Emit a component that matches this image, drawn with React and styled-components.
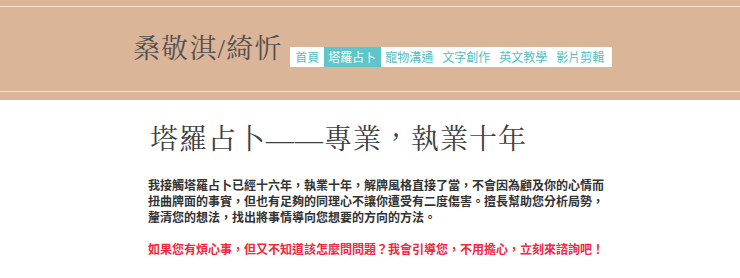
import React from "react";
import styled, { createGlobalStyle } from "styled-components";

const GlobalStyle = createGlobalStyle`
  html, body {
    margin: 0;
    padding: 0;
    background: #ffffff;
  }
  body {
    font-family: "Noto Sans CJK TC", sans-serif;
  }
`;

const Header = styled.header`
  background: #dab598;
  padding: 6px 0 8px;
`;

const HeaderInner = styled.div`
  height: 86px;
  box-sizing: border-box;
  border-top: 1px solid #f7e3cf;
  border-bottom: 1px solid #f7e3cf;
  display: flex;
  align-items: flex-end;
  padding: 0 0 24px 133px;
`;

const SiteTitle = styled.h1`
  margin: 0 7px 2px 0;
  font-family: "Liberation Serif", "Noto Serif CJK TC", "Noto Sans CJK TC", serif;
  font-size: 27px;
  font-weight: normal;
  line-height: 32px;
  color: #545050;
  letter-spacing: 1.2px;
`;

const Nav = styled.nav`
  display: flex;
  background: #ffffff;
  height: 20px;
  padding: 0 3px 0 1px;
`;

const NavItem = styled.a`
  display: flex;
  align-items: center;
  padding: 0 4.5px;
  font-size: 12px;
  line-height: 20px;
  text-decoration: none;
  color: ${(p) => (p.$active ? "#ffffff" : "#4fbfc4")};
  background: ${(p) => (p.$active ? "#5ec6ca" : "transparent")};
`;

const Main = styled.main`
  padding: 23px 0 0 148px;
  width: 459px;
`;

const Heading = styled.h2`
  margin: 0 0 20px 2px;
  font-family: "Liberation Serif", "Noto Serif CJK TC", "Noto Sans CJK TC", serif;
  font-size: 28px;
  font-weight: normal;
  line-height: 34px;
  color: #3f3f3f;
  letter-spacing: 1px;
`;

const Para = styled.p`
  margin: 0 0 16px;
  font-size: 12px;
  line-height: 16px;
  font-weight: bold;
  color: ${(p) => (p.$accent ? "#f0283c" : "#333333")};
`;

const navItems = ["首頁", "塔羅占卜", "寵物溝通", "文字創作", "英文教學", "影片剪輯"];

export default function App() {
  return (
    <>
      <GlobalStyle />
      <Header>
        <HeaderInner>
          <SiteTitle>桑敬淇/綺忻</SiteTitle>
          <Nav>
            {navItems.map((item) => (
              <NavItem key={item} href="#" $active={item === "塔羅占卜"}>
                {item}
              </NavItem>
            ))}
          </Nav>
        </HeaderInner>
      </Header>
      <Main>
        <Heading>塔羅占卜——專業，執業十年</Heading>
        <Para>
          我接觸塔羅占卜已經十六年，執業十年，解牌風格直接了當，不會因為顧及你的心情而扭曲牌面的事實，但也有足夠的同理心不讓你遭受有二度傷害。擅長幫助您分析局勢，釐清您的想法，找出將事情導向您想要的方向的方法。
        </Para>
        <Para $accent>
          如果您有煩心事，但又不知道該怎麼問問題？我會引導您，不用擔心，立刻來諮詢吧！
        </Para>
      </Main>
    </>
  );
}
